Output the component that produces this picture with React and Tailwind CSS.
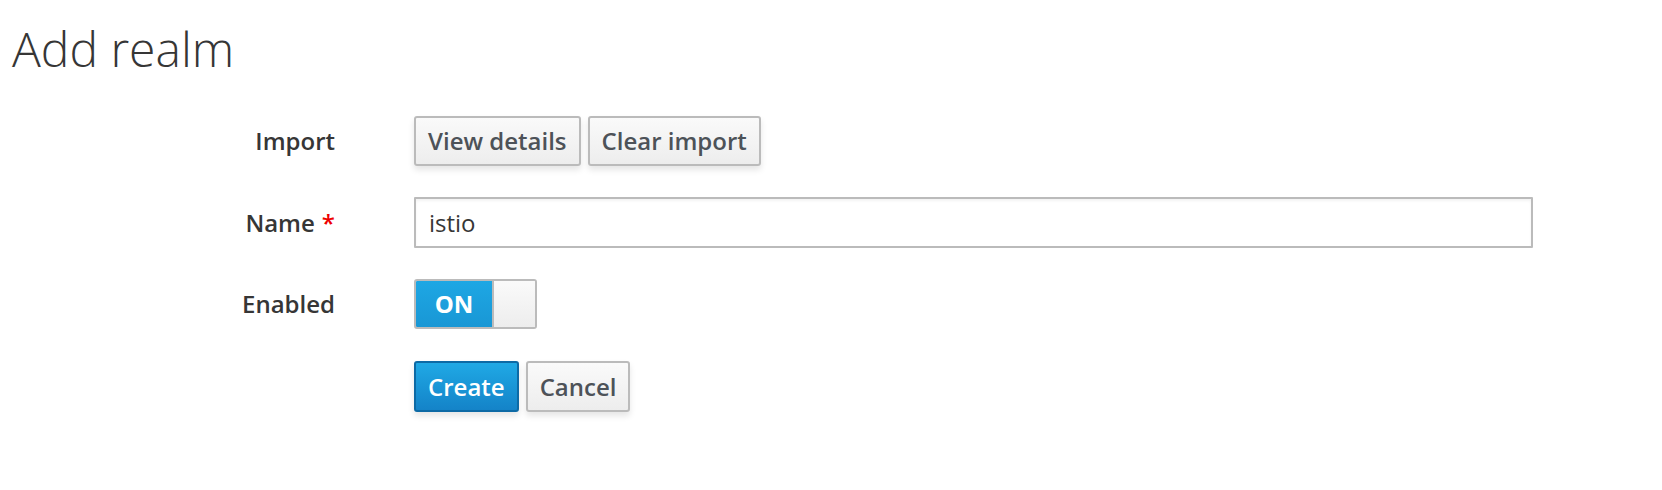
import { useState } from 'react';

const btnDefault =
  'rounded-[3px] border-2 border-[#bbbbbb] bg-gradient-to-b from-[#fafafa] to-[#ededed] px-[12px] text-[24px] font-semibold text-[#4d5258] shadow-[0_4px_6px_rgba(3,3,3,0.1)]';

function FormRow({ label, required, className = '', children }) {
  return (
    <div className={'flex items-center ' + className}>
      <label className="w-[335px] shrink-0 text-right text-[24px] font-semibold text-[#363636]">
        {label}
        {required && <span className="ml-[7px] text-[#e00]">*</span>}
      </label>
      <div className="ml-[79px] flex items-center gap-[7px]">{children}</div>
    </div>
  );
}

function Toggle({ on, onChange }) {
  return (
    <button
      type="button"
      onClick={() => onChange(!on)}
      className="flex h-[50px] w-[123px] overflow-hidden rounded-[3px] border-2 border-[#bbbbbb]"
    >
      <span className="flex h-full w-[76px] items-center justify-center bg-gradient-to-b from-[#1ea7e4] to-[#1997d5] text-[24px] font-bold text-white">
        {on ? 'ON' : 'OFF'}
      </span>
      <span className="h-full flex-1 border-l-2 border-[#bbbbbb] bg-gradient-to-b from-[#fafafa] to-[#ededed]" />
    </button>
  );
}

export default function App() {
  const [name, setName] = useState('istio');
  const [enabled, setEnabled] = useState(true);

  return (
    <div className="h-[490px] bg-white font-['Open_Sans',sans-serif] text-[#363636]">
      <h1 className="pl-[12px] pt-[15px] text-[48px] font-light leading-[68px]">Add realm</h1>

      <form className="mt-[33px] flex flex-col" onSubmit={(e) => e.preventDefault()}>
        <FormRow label="Import" className="h-[50px]">
          <button type="button" className={btnDefault + ' h-[50px]'}>View details</button>
          <button type="button" className={btnDefault + ' h-[50px]'}>Clear import</button>
        </FormRow>

        <FormRow label="Name" required className="mt-[31px] h-[51px]">
          <input
            value={name}
            onChange={(e) => setName(e.target.value)}
            className="h-[51px] w-[1119px] rounded-[1px] border-2 border-[#bbbbbb] bg-white px-[13px] text-[24px] text-[#363636] shadow-[inset_0_2px_3px_rgba(0,0,0,0.05)] outline-none"
          />
        </FormRow>

        <FormRow label="Enabled" className="mt-[31px] h-[50px]">
          <Toggle on={enabled} onChange={setEnabled} />
        </FormRow>

        <FormRow label="" className="mt-[32px] h-[51px]">
          <button
            type="submit"
            className="h-[51px] rounded-[3px] border-2 border-[#0d6aa5] bg-gradient-to-b from-[#20a9e5] to-[#1483c8] px-[12px] text-[24px] font-semibold text-white shadow-[0_4px_6px_rgba(3,3,3,0.1)]"
          >
            Create
          </button>
          <button type="button" className={btnDefault + ' h-[51px]'}>Cancel</button>
        </FormRow>
      </form>
    </div>
  );
}
